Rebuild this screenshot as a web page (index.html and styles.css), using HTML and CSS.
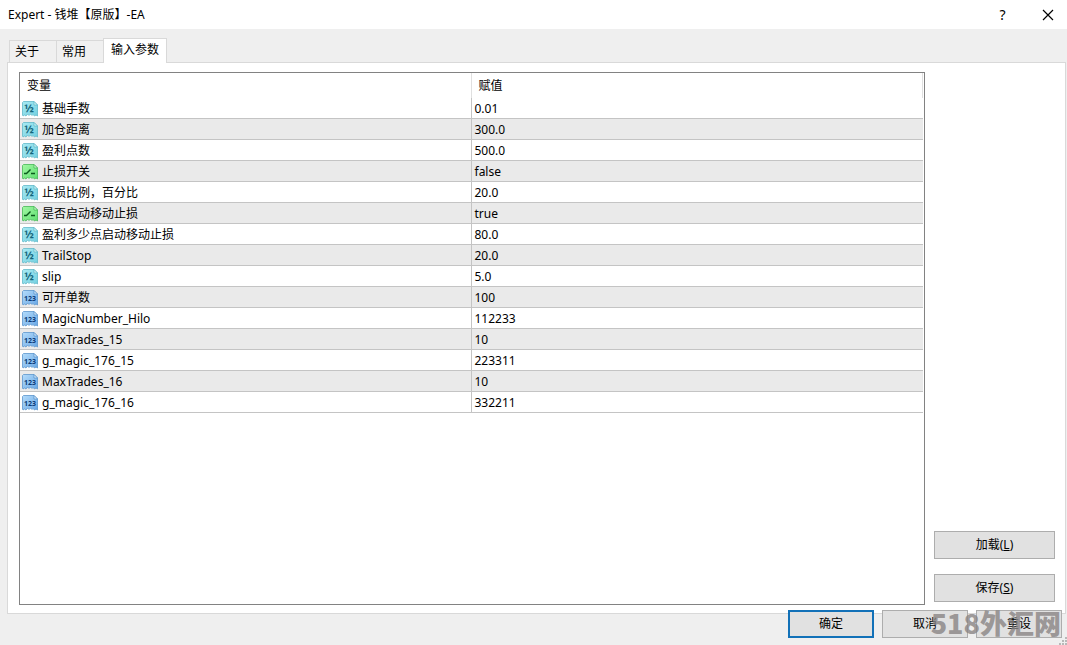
FILE: index.html
```html
<!DOCTYPE html>
<html lang="zh-CN">
<head>
  <meta charset="UTF-8" />
  <meta name="viewport" content="width=device-width, initial-scale=1.0"/>
  <title>Expert - 钱堆【原版】-EA</title>
  <link rel="stylesheet" href="styles.css">
</head>
<body>
  <!-- Page shapes shared by the row icons -->
  <svg class="sprite" aria-hidden="true">
    <defs>
      <linearGradient id="cyan" x1="0" y1="0" x2="1" y2="1">
        <stop offset="0" stop-color="#a8eaf3"/><stop offset="1" stop-color="#74d0e0"/>
      </linearGradient>
      <linearGradient id="green" x1="0" y1="0" x2="1" y2="1">
        <stop offset="0" stop-color="#a2f7a4"/><stop offset="1" stop-color="#5fe070"/>
      </linearGradient>
      <linearGradient id="blue" x1="0" y1="0" x2="1" y2="1">
        <stop offset="0" stop-color="#b4dcfb"/><stop offset="1" stop-color="#6aa8e6"/>
      </linearGradient>
    </defs>
    <symbol id="icon-double" viewBox="0 0 16 16">
      <path d="M1.5.5h10.5l3.5 3.5v11l-1.5-1-1.5 1-1.5-1.5-1 1-1.5-1.5-1.5 1.5-1.5-1.5-1.5 2-1.5-1-1.5 1L.5 14V1.5z" fill="url(#cyan)" stroke="#62b9c9" stroke-width=".8"/>
      <path d="M12 .5V4h3.5z" fill="#dcf8fb" stroke="#62b9c9" stroke-width=".8"/>
    </symbol>
    <symbol id="icon-bool" viewBox="0 0 16 16">
      <path d="M1.5.5h10.5l3.5 3.5v11l-1.5-1-1.5 1-1.5-1.5-1 1-1.5-1.5-1.5 1.5-1.5-1.5-1.5 2-1.5-1-1.5 1L.5 14V1.5z" fill="url(#green)" stroke="#46b857" stroke-width=".8"/>
      <path d="M12 .5V4h3.5z" fill="#d8fcd9" stroke="#46b857" stroke-width=".8"/>
      <path d="M2 9.5h2.5L8.5 5.5M9 9.5h4" fill="none" stroke="#0b5a1c" stroke-width="1.4"/>
    </symbol>
    <symbol id="icon-int" viewBox="0 0 16 16">
      <path d="M1.5.5h10.5l3.5 3.5v11l-1.5-1-1.5 1-1.5-1.5-1 1-1.5-1.5-1.5 1.5-1.5-1.5-1.5 2-1.5-1-1.5 1L.5 14V1.5z" fill="url(#blue)" stroke="#5c96cd" stroke-width=".8"/>
      <path d="M12 .5V4h3.5z" fill="#dff0fd" stroke="#5c96cd" stroke-width=".8"/>
    </symbol>
  </svg>

  <div class="dialog">
    <header class="titlebar">
      <h1>Expert - 钱堆【原版】-EA</h1>
      <button class="caption-btn" type="button" aria-label="Help">?</button>
      <button class="caption-btn" type="button" aria-label="Close">
        <svg width="12" height="12" viewBox="0 0 12 12"><path d="M1 1l10 10M11 1L1 11" stroke="#000" stroke-width="1.2"/></svg>
      </button>
    </header>

    <div class="tabs" role="tablist">
      <button class="tab" type="button" role="tab">关于</button>
      <button class="tab" type="button" role="tab">常用</button>
      <button class="tab active" type="button" role="tab" aria-selected="true">输入参数</button>
    </div>

    <main class="panel">
      <div class="list">
        <table class="params">
          <thead>
            <tr><th>变量</th><th>赋值</th></tr>
          </thead>
          <tbody id="rows"></tbody>
        </table>
      </div>
      <div class="side">
        <button class="btn" type="button">加载(<u>L</u>)</button>
        <button class="btn" type="button">保存(<u>S</u>)</button>
      </div>
    </main>

    <footer class="footer">
      <button class="btn primary" type="button">确定</button>
      <button class="btn" type="button">取消</button>
      <button class="btn" type="button">重设</button>
      <div class="watermark">518外汇网</div>
      <svg class="grip" width="8" height="8" viewBox="0 0 8 8" fill="#b8b8b8"><path d="M6 0h2v2H6zM3 3h2v2H3zM6 3h2v2H6zM0 6h2v2H0zM3 6h2v2H3zM6 6h2v2H6z"/></svg>
    </footer>
  </div>

  <script src="script.js"></script>
</body>
</html>
```
FILE: styles.css
```css
body {
  margin: 0;
  font-family: "Noto Sans", "Noto Sans CJK SC", sans-serif;
  font-size: 12px;
  line-height: 20px;
  color: #000;
}

button {
  font: inherit;
  color: inherit;
  padding: 0;
}

.sprite {
  position: absolute;
  width: 0;
  height: 0;
}

.dialog {
  display: flex;
  flex-direction: column;
  height: 100vh;
  overflow: hidden;
  background: #efefef;
}

/* Title bar */
.titlebar {
  display: flex;
  align-items: center;
  height: 29px;
  padding-left: 8px;
  background: #fff;
}

.titlebar h1 {
  flex: 1;
  margin: 0;
  font-size: 12px;
  font-weight: normal;
}

.caption-btn {
  display: flex;
  align-items: center;
  justify-content: center;
  width: 45px;
  height: 26px;
  border: none;
  background: none;
  font-size: 14px;
}

.caption-btn:last-child {
  margin-right: -3px;
}

/* Tabs */
.tabs {
  display: flex;
  align-items: flex-end;
  height: 25px;
  margin: 9px 0 -1px 9px;
  position: relative;
}

.tab {
  width: 48px;
  height: 23px;
  margin-right: -1px;
  padding-left: 5px;
  border: 1px solid #d9d9d9;
  background: #f0f0f0;
  text-align: left;
}

.tab.active {
  width: 64px;
  height: 25px;
  padding: 0 0 2px;
  border-bottom: none;
  background: #fff;
  text-align: center;
}

/* Tab page */
.panel {
  flex: 1;
  display: flex;
  gap: 9px;
  min-height: 0;
  margin: 0 1px 0 7px;
  padding: 9px 10px 8px 11px;
  border: 1px solid #d9d9d9;
  background: #fff;
}

.list {
  flex: 1;
  padding-right: 1px;
  border: 1px solid #828282;
  overflow: hidden;
}

.params {
  width: 100%;
  table-layout: fixed;
  border-collapse: separate;
  border-spacing: 0;
}

.params th {
  height: 25px;
  padding: 0 7px;
  border-right: 1px solid #e0e0e0;
  font-weight: normal;
  text-align: left;
}

.params td {
  height: 18px;
  padding: 2px 3px 0;
  border-bottom: 1px solid #c4c4c4;
  line-height: 18px;
}

.params td:first-child {
  padding-left: 2px;
  border-right: 1px solid #c4c4c4;
}

.params tbody tr:nth-child(even) {
  background: #eaeaea;
}

.name {
  display: flex;
  align-items: center;
  gap: 4px;
  height: 18px;
}

.icon text {
  font-size: 7px;
  font-weight: bold;
  text-anchor: middle;
  fill: #0c3c78;
}

.icon.double text {
  font-size: 11px;
  fill: #14657c;
}

.side {
  display: flex;
  flex-direction: column;
  justify-content: flex-end;
  gap: 15px;
  width: 121px;
  padding-bottom: 3px;
}

.btn {
  height: 28px;
  border: 1px solid #adadad;
  background: #e1e1e1;
}

/* Bottom buttons, they slightly overlap the tab page */
.footer {
  position: relative;
  display: flex;
  justify-content: flex-end;
  gap: 8px;
  margin-top: -4px;
  padding: 0 5px 7px;
}

.footer .btn {
  width: 86px;
}

.btn.primary {
  border: 2px solid #1271b8;
}

.watermark {
  position: absolute;
  right: 6px;
  bottom: 6px;
  font-family: "Noto Sans CJK SC", sans-serif;
  font-size: 27px;
  font-weight: 900;
  line-height: 32px;
  color: rgba(136, 131, 131, 0.8);
  pointer-events: none;
}

.grip {
  position: absolute;
  right: 0;
  bottom: 0;
}
```
FILE: script.js
```js
const params = [
  ["double", "基础手数", "0.01"],
  ["double", "加仓距离", "300.0"],
  ["double", "盈利点数", "500.0"],
  ["bool", "止损开关", "false"],
  ["double", "止损比例，百分比", "20.0"],
  ["bool", "是否启动移动止损", "true"],
  ["double", "盈利多少点启动移动止损", "80.0"],
  ["double", "TrailStop", "20.0"],
  ["double", "slip", "5.0"],
  ["int", "可开单数", "100"],
  ["int", "MagicNumber_Hilo", "112233"],
  ["int", "MaxTrades_15", "10"],
  ["int", "g_magic_176_15", "223311"],
  ["int", "MaxTrades_16", "10"],
  ["int", "g_magic_176_16", "332211"]
];

// Text printed on each icon
const labels = {
  double: '<text x="7" y="11">½</text>',
  int: '<text x="8" y="11">123</text>',
  bool: ""
};

document.getElementById("rows").innerHTML = params.map(([type, name, value]) =>
  `<tr>
    <td><div class="name"><svg class="icon ${type}" width="16" height="16"><use href="#icon-${type}"/>${labels[type]}</svg>${name}</div></td>
    <td>${value}</td>
  </tr>`
).join("");
```
